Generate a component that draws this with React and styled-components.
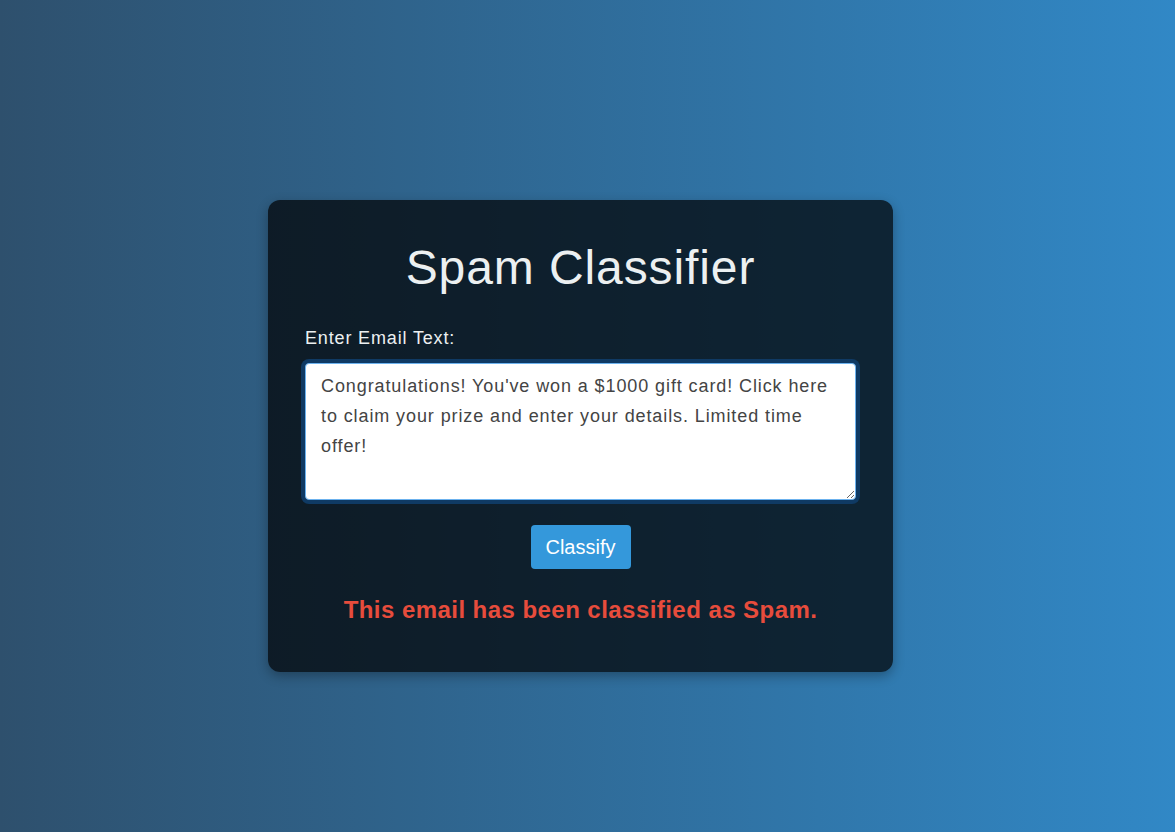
import React from 'react'
import styled, { createGlobalStyle } from 'styled-components'

const GlobalStyle = createGlobalStyle`
  html, body {
    margin: 0;
    padding: 0;
    height: 100%;
  }
  body {
    font-family: "Liberation Sans", Arial, sans-serif;
    background: linear-gradient(to right, #2e506d, #3188c6);
  }
  #root {
    height: 100%;
  }
`

const Page = () => {
  return (
    <>
      <GlobalStyle />
      <Wrapper>
        <Card>
          <Title>Spam Classifier</Title>
          <Label htmlFor="email">Enter Email Text:</Label>
          <EmailInput
            id="email"
            defaultValue="Congratulations! You've won a $1000 gift card! Click here to claim your prize and enter your details. Limited time offer!"
          />
          <Actions>
            <ClassifyButton>Classify</ClassifyButton>
          </Actions>
          <Result spam>This email has been classified as Spam.</Result>
        </Card>
      </Wrapper>
    </>
  )
}

export default Page

const Wrapper = styled.div`
  height: 832px;
  display: flex;
  align-items: flex-start;
  justify-content: center;
  padding: 200px 14px 0 0;
  box-sizing: border-box;
`

const Card = styled.div`
  width: 625px;
  box-sizing: border-box;
  padding: 40px 37px 39px;
  background: rgba(0, 0, 0, 0.7);
  border-radius: 12px;
  box-shadow: 0 4px 12px rgba(0, 0, 0, 0.3);
`

const Title = styled.h1`
  margin: 0 0 33px;
  text-align: center;
  font-size: 48px;
  font-weight: 400;
  line-height: normal;
  letter-spacing: 0.9px;
  color: #ecf0f1;
`

const Label = styled.label`
  display: block;
  margin-bottom: 14px;
  font-size: 18px;
  letter-spacing: 0.85px;
  color: #ecf0f1;
`

const EmailInput = styled.textarea`
  display: block;
  width: 100%;
  height: 137px;
  box-sizing: border-box;
  padding: 7px 15px;
  font-family: "Liberation Sans", Arial, sans-serif;
  font-size: 18px;
  line-height: 30px;
  letter-spacing: 0.9px;
  color: #444;
  background: #fff;
  border: 1px solid #6cb2ee;
  border-radius: 4px;
  box-shadow: 0 0 0 4px #0f3a64;
  outline: none;
`

const Actions = styled.div`
  display: flex;
  justify-content: center;
  margin-top: 25px;
`

const ClassifyButton = styled.button`
  width: 100px;
  height: 44px;
  border: none;
  border-radius: 4px;
  background: #3498db;
  color: #fff;
  font-family: "Liberation Sans", Arial, sans-serif;
  font-size: 20px;
  cursor: pointer;

  &:hover {
    background: #2980b9;
  }
`

const Result = styled.p`
  margin: 27px 0 9px;
  text-align: center;
  font-size: 24px;
  font-weight: 700;
  letter-spacing: 0.45px;
  color: ${p => (p.spam ? '#e74c3c' : '#2ecc71')};
`
